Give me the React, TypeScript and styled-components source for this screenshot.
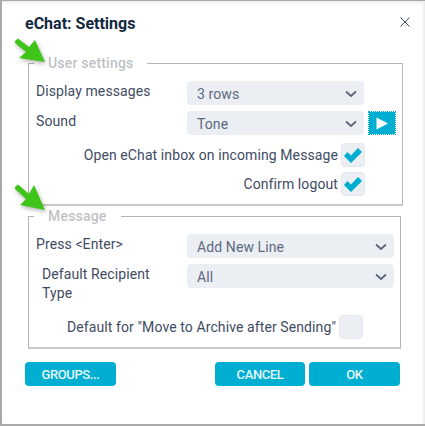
import { createGlobalStyle, styled } from "styled-components";

const GlobalStyle = createGlobalStyle`
  html, body {
    margin: 0;
    padding: 0;
    background: #fff;
  }
  body {
    font-family: Roboto, "Liberation Sans", sans-serif;
  }
`;

const Dialog = styled.div`
  position: relative;
  box-sizing: border-box;
  width: 425px;
  height: 426px;
  padding: 13px 15px 0 23px;
  background: #fff;
  border: solid #a9a9a9;
  border-width: 1px 0 2px 2px;
  box-shadow: inset -3px 0 2px -1px #ececec, inset 0 4px 4px -3px #e4e4e4;
  overflow: hidden;
`;

const Header = styled.div`
  display: flex;
  justify-content: space-between;
  align-items: flex-start;
  height: 41px;
`;

const Title = styled.h1`
  margin: 0;
  font-size: 16px;
  line-height: 20px;
  font-weight: 700;
  color: #12293f;
`;

const CloseButton = styled.button`
  display: flex;
  margin: 3px 0 0 0;
  padding: 0;
  border: 0;
  background: none;
  color: #3b4a5e;
`;

const Group = styled.fieldset<{ $height: number }>`
  box-sizing: border-box;
  height: ${(p) => p.$height}px;
  margin: 0 0 0 3px;
  padding: 0 6px 0 7px;
  width: 373px;
  border: 1px solid #b4b4b4;
  border-bottom-width: 2px;
  border-bottom-color: #c8c8c8;
`;

const Legend = styled.legend`
  margin-left: -2px;
  padding: 0 14px;
  font-size: 14px;
  line-height: 16px;
  font-weight: 500;
  letter-spacing: 0.2px;
  color: #c0c2c6;
`;

const Rows = styled.div`
  display: flex;
  flex-direction: column;
  padding-top: 10px;
`;

const Row = styled.div<{ $gap?: number }>`
  display: grid;
  grid-template-columns: 151px 177px 4px 28px;
  align-items: start;
  margin-bottom: ${(p) => p.$gap ?? 6}px;
`;

const WideRow = styled(Row)`
  grid-template-columns: 151px 207px;
`;

const Label = styled.label<{ $indent?: boolean }>`
  padding: 1px 10px 0 ${(p) => (p.$indent ? 6 : 0)}px;
  font-size: 14px;
  line-height: 19px;
  letter-spacing: 0.1px;
  color: #3f4b63;
`;

const Select = styled.div`
  grid-column: 2;
  display: flex;
  align-items: center;
  justify-content: space-between;
  box-sizing: border-box;
  height: 24px;
  padding: 2px 7px 0 10px;
  border-radius: 4px;
  background: #ebeef3;
  font-size: 14px;
  letter-spacing: 0.1px;
  color: #5d6980;
`;

const PlayButton = styled.button`
  grid-column: 4;
  display: flex;
  align-items: center;
  justify-content: center;
  box-sizing: border-box;
  width: 28px;
  height: 24px;
  padding: 0;
  border: 1px dotted #00aed1;
  background: #00aed1;
  background-clip: padding-box;
`;

const CheckRow = styled.div<{ $gap?: number }>`
  display: flex;
  justify-content: flex-end;
  align-items: center;
  gap: 3px;
  height: 24px;
  padding-right: 31px;
  margin-bottom: ${(p) => p.$gap ?? 5}px;
  font-size: 14px;
  letter-spacing: 0.1px;
  color: #3f4b63;
`;

const CheckBox = styled.span`
  display: flex;
  align-items: center;
  justify-content: center;
  box-sizing: border-box;
  width: 24px;
  height: 24px;
  border-radius: 4px;
  border: 1px solid #e4e8ee;
  background: #ebeef3;
  color: #00aed1;
`;

const Gap = styled.div`
  height: 2px;
`;

const Footer = styled.div`
  display: flex;
  gap: 4px;
  margin-top: 13px;
`;

const Button = styled.button<{ $push?: boolean; $width?: number }>`
  width: ${(p) => p.$width ?? 91}px;
  height: 24px;
  margin-left: ${(p) => (p.$push ? "95px" : 0)};
  padding: 0;
  border: 0;
  border-radius: 4px;
  background: #00aed1;
  color: #e6f7fb;
  font-family: inherit;
  font-size: 13px;
  font-weight: 500;
  letter-spacing: -0.4px;
`;

const Arrow = styled.svg<{ $top: number }>`
  position: absolute;
  left: 12px;
  top: ${(p) => p.$top}px;
  filter: drop-shadow(1px 2px 2px rgba(0, 0, 0, 0.3));
`;

function Chevron() {
  return (
    <svg width="12" height="8" viewBox="0 0 12 8" fill="none">
      <path d="M1 1.5 L6 6 L11 1.5" stroke="#5a6478" strokeWidth="1.7" />
    </svg>
  );
}

function Check() {
  return (
    <svg width="18" height="15" viewBox="0 0 18 15">
      <path d="M0 8 L3.5 4 L7 7.5 L14 0 L18 4 L7 15 Z" fill="currentColor" />
    </svg>
  );
}

function GreenArrow({ top, d }: { top: number; d: string }) {
  return (
    <Arrow $top={top} width="36" height="32" viewBox="0 0 36 32">
      <path d={d} fill="#3fc41a" />
    </Arrow>
  );
}

export default function App() {
  return (
    <>
      <GlobalStyle />
      <Dialog>
        <Header>
          <Title>eChat: Settings</Title>
          <CloseButton aria-label="Close">
            <svg width="10" height="10" viewBox="0 0 10 10" fill="none">
              <path d="M0.5 0.5 L9.5 9.5 M9.5 0.5 L0.5 9.5" stroke="currentColor" strokeWidth="1" />
            </svg>
          </CloseButton>
        </Header>

        <Group $height={151}>
          <Legend>User settings</Legend>
          <Rows>
            <Row>
              <Label>Display messages</Label>
              <Select>
                3 rows
                <Chevron />
              </Select>
            </Row>
            <Row $gap={8}>
              <Label>Sound</Label>
              <Select>
                Tone
                <Chevron />
              </Select>
              <PlayButton aria-label="Play">
                <svg width="12" height="13" viewBox="0 0 12 13">
                  <path d="M0.5 0.5 L12 6.5 L0.5 12.5 Z" fill="#fff" />
                </svg>
              </PlayButton>
            </Row>
            <CheckRow>
              Open eChat inbox on incoming Message
              <CheckBox>
                <Check />
              </CheckBox>
            </CheckRow>
            <CheckRow $gap={0}>
              Confirm logout
              <CheckBox>
                <Check />
              </CheckBox>
            </CheckRow>
          </Rows>
        </Group>

        <Gap />

        <Group $height={141}>
          <Legend>Message</Legend>
          <Rows>
            <WideRow>
              <Label>Press &lt;Enter&gt;</Label>
              <Select>
                Add New Line
                <Chevron />
              </Select>
            </WideRow>
            <WideRow $gap={12}>
              <Label $indent>Default Recipient Type</Label>
              <Select>
                All
                <Chevron />
              </Select>
            </WideRow>
            <CheckRow $gap={0}>
              Default for "Move to Archive after Sending"
              <CheckBox />
            </CheckRow>
          </Rows>
        </Group>

        <Footer>
          <Button>GROUPS...</Button>
          <Button $push $width={90}>
            CANCEL
          </Button>
          <Button>OK</Button>
        </Footer>

        <GreenArrow top={37} d="M1 3 L4 0.5 L15 9 L21 2 L31 24 L5 20 L12 14 L1 5 Z" />
        <GreenArrow top={182} d="M1 4 L4 1.5 L15 11 L20 2 L31 27 L6 22 L12 16 L1 6 Z" />
      </Dialog>
    </>
  );
}
